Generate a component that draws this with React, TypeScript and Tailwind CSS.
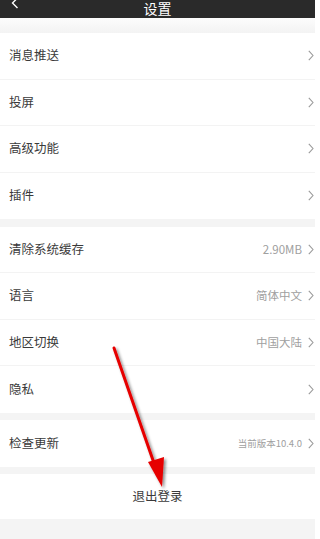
import React from 'react';

type Row = { label: string; value?: string; small?: boolean };

const groups: Row[][] = [
  [{ label: '消息推送' }, { label: '投屏' }, { label: '高级功能' }, { label: '插件' }],
  [
    { label: '清除系统缓存', value: '2.90MB' },
    { label: '语言', value: '简体中文' },
    { label: '地区切换', value: '中国大陆' },
    { label: '隐私' },
  ],
  [{ label: '检查更新', value: '当前版本10.4.0', small: true }],
];

function Chevron() {
  return (
    <svg width="6" height="11" viewBox="0 0 6 11" className="shrink-0">
      <path d="M0.8 0.8 L5 5.5 L0.8 10.2" fill="none" stroke="#9a9a9a" strokeWidth="1.1" />
    </svg>
  );
}

function SettingRow({ row, last }: { row: Row; last: boolean }) {
  return (
    <div
      className={`flex h-[46.5px] items-center pl-[9px] pr-[1px] ${last ? '' : 'border-b border-[#f3f3f3]'}`}
    >
      <span className="flex-1 text-[12.5px] text-[#3a3a3a]">{row.label}</span>
      {row.value && (
        <span className={`mr-[6px] text-[#a0a0a0] ${row.small ? 'text-[9.5px]' : 'text-[11.5px]'}`}>
          {row.value}
        </span>
      )}
      <Chevron />
    </div>
  );
}

export default function App() {
  return (
    <div
      className="relative h-[539px] w-[315px] overflow-hidden bg-[#f4f4f4]"
      style={{ fontFamily: '"Noto Sans CJK SC", "Noto Sans", sans-serif' }}
    >
      {/* top bar, mostly scrolled out of view */}
      <div className="relative flex h-[18px] items-end justify-center overflow-hidden bg-[#2a2a2a]">
        <span className="text-[14px] leading-[20px] text-white">设置</span>
        <svg width="8" height="12" viewBox="0 0 8 12" className="absolute left-[11px] top-[-3px]">
          <path d="M6.5 1 L1.5 6 L6.5 11" fill="none" stroke="#fff" strokeWidth="1.4" />
        </svg>
      </div>

      <div className="h-[15px] bg-gradient-to-b from-[#fcfcfc] to-[#f3f3f3]" />

      <div className="flex flex-col gap-[7.5px]">
        {groups.map((g, gi) => (
          <div key={gi} className="bg-white">
            {g.map((r, i) => (
              <SettingRow key={r.label} row={r} last={i === g.length - 1} />
            ))}
          </div>
        ))}
        <div className="flex h-[45px] items-center justify-center bg-white text-[12.5px] text-[#3a3a3a]">
          退出登录
        </div>
      </div>

      {/* red annotation arrow */}
      <svg className="pointer-events-none absolute left-0 top-0" width="315" height="539">
        <defs>
          <filter id="sh" x="-50%" y="-50%" width="200%" height="200%">
            <feDropShadow dx="2" dy="2" stdDeviation="1.5" floodColor="#000" floodOpacity="0.45" />
          </filter>
        </defs>
        <g filter="url(#sh)">
          <line x1="114" y1="348" x2="155" y2="466" stroke="#e60000" strokeWidth="3" strokeLinecap="round" />
          <polygon points="148,462 164,457 162,487" fill="#e60000" />
        </g>
      </svg>
    </div>
  );
}
